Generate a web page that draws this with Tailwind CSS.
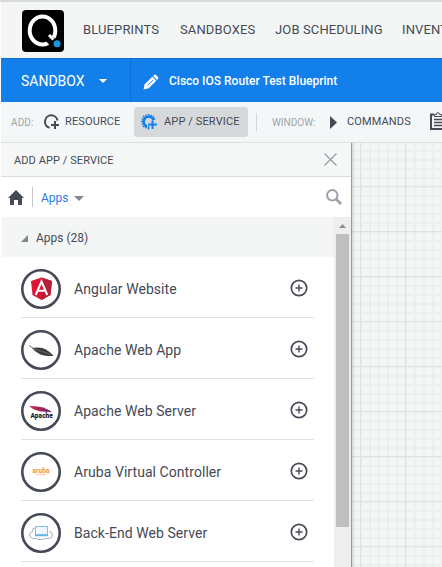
<!DOCTYPE html>
<html lang="en">
<head>
<meta charset="utf-8">
<title>Sandbox</title>
<script src="https://cdn.jsdelivr.net/npm/@tailwindcss/browser@4"></script>
</head>
<body class="bg-white">
<div class="w-[442px] h-[567px] overflow-hidden flex flex-col font-['Roboto',sans-serif] text-[#454a56] whitespace-nowrap">
  <div class="h-[2px] shrink-0 bg-[#d9dbda]"></div>
  <div class="flex-1 min-h-0 ml-px flex flex-col overflow-hidden">
    <nav class="h-[56px] shrink-0 bg-[#f4f6f5] flex items-center text-[13px] tracking-[0.13px]">
      <svg class="ml-[21px] w-[42px] h-[42px] shrink-0 mt-[2px]" viewBox="0 0 42 42">
        <rect width="42" height="42" rx="4" fill="#000"/>
        <ellipse cx="20.500" cy="20.500" rx="12.800" ry="14" fill="none" stroke="#fff" stroke-width="4"/>
        <path d="M24 31l7-4 5 3-6 8z" fill="#000"/>
        <path d="M27 25l4.500 4.500" stroke="#fff" stroke-width="3"/>
        <circle cx="35" cy="33.700" r="5" fill="#000"/>
        <circle cx="35" cy="33.700" r="3.500" fill="#139be0"/>
      </svg>
      <span class="ml-[19px] w-[97px] shrink-0 -mt-px">BLUEPRINTS</span>
      <span class="w-[95px] shrink-0 -mt-px">SANDBOXES</span>
      <span class="w-[127px] shrink-0 -mt-px">JOB SCHEDULING</span>
      <span class="shrink-0 -mt-px">INVENTORY</span>
    </nav>
    <header class="h-[44px] shrink-0 bg-[#127fea] border-t border-[#0f6fd0] text-white flex">
      <div class="w-[130px] shrink-0 border-r border-[#0f6fd0] flex items-center pl-[20px]">
        <span class="w-[78px] text-[14px] mt-[2px]">SANDBOX</span>
        <svg class="w-[8px] h-[4px]" viewBox="0 0 8 4"><path d="M0 0h8L4 4z" fill="#fff"/></svg>
      </div>
      <div class="flex items-center pl-[12px]">
        <svg class="w-[16px] h-[16px] mt-[2px]" viewBox="0 0 16 16"><path d="M.5 15.500l1.200-5.200L9.300 2.700l4 4L5.700 14.300z" fill="#fff"/><path d="M10 2l1-1q1-.8 2 0l2 2q.8 1 0 2l-1 1z" fill="#fff"/><path d="M4.500 11.500l5.500-5.500" stroke="#127fea" stroke-width=".9"/></svg>
        <span class="ml-[10px] text-[12px] font-medium">Cisco IOS Router Test Blueprint</span>
      </div>
    </header>
    <div class="h-[41px] shrink-0 bg-[#f4f7f8] border-b border-[#dbdfdf] flex items-center text-[11px] tracking-[0.13px]">
      <span class="ml-[10px] w-[33px] shrink-0 text-[10px] text-[#a0a3a6]">ADD:</span>
      <svg class="w-[16px] h-[16px] shrink-0" viewBox="0 0 16 16" fill="none" stroke="#454a56" stroke-width="2"><path d="M5.500 13.700A6.300 6.300 0 1 1 13.500 6.500M7 11h8M11 7v8"/></svg>
      <span class="ml-[5px] w-[69px] shrink-0">RESOURCE</span>
      <div class="w-[114px] h-[30px] shrink-0 rounded-[3px] bg-[#d5d9da] flex items-center pl-[7px]">
        <svg class="w-[16px] h-[16px] shrink-0" viewBox="0 0 16 16" fill="none" stroke="#127fea"><path d="M6 12.300A5 5 0 1 1 12.500 6" stroke-width="2.400"/><path d="M7.500 0v3M0 7.500h3M2 2l2 2M11 4l2-2M2 13l2-2M4.600.7l1 2.500M10.400.7l-1 2.500M.7 4.600l2.500 1M.7 10.400l2.500-1M14.300 4.600l-2.500 1M5.500 11.800l-1 2.500M7.500 12v3.500" stroke-width="1.500"/><path d="M7 10.500h9M11.500 6.500v8.500" stroke-width="2"/></svg>
        <span class="ml-[7px]">APP / SERVICE</span>
      </div>
      <div class="ml-[8px] w-px h-[18px] shrink-0 bg-[#d3d7d9]"></div>
      <span class="ml-[15px] w-[58px] shrink-0 text-[10px] tracking-normal text-[#a0a3a6]">WINDOW:</span>
      <svg class="w-[7px] h-[13px] shrink-0" viewBox="0 0 7 13"><path d="M0 0l7 6.500-7 6.500z" fill="#454a56"/></svg>
      <span class="ml-[10px] w-[83px] shrink-0">COMMANDS</span>
      <svg class="w-[16px] h-[18px] shrink-0 mb-[2px]" viewBox="0 0 16 18" fill="none" stroke="#454a56"><path d="M4 2.500H1v14.500h14V2.500h-3" stroke-width="2"/><path d="M4.500 4.500v-2h2q0-1.800 1.500-1.800t1.500 1.800h2v2z"/><path d="M4 7.500h8M4 10.500h8M4 13.500h8" stroke-width="1.500"/></svg>
    </div>
    <main class="flex-1 min-h-0 flex">
      <aside class="w-[351px] shrink-0 bg-white border-r border-[#979ca4] flex flex-col">
        <div class="h-[34px] shrink-0 bg-[#f6f8f8] border-b border-[#d9dddd] flex items-center pl-[13px] pr-[14px] justify-between">
          <span class="text-[11px] tracking-[0.08px] mt-[3px]">ADD APP / SERVICE</span>
          <svg class="w-[13px] h-[13px]" viewBox="0 0 13 13"><path d="M.5.5l12 12M12.500.5l-12 12" stroke="#9499a5" stroke-width="1.200"/></svg>
        </div>
        <div class="h-[40px] shrink-0 flex items-center pl-[7px]">
          <svg class="w-[16px] h-[15px]" viewBox="0 0 16 15"><path d="M8 0l8 8h-2v7H10V10H6v5H2V8H0z" fill="#454a56"/></svg>
          <div class="ml-[8px] w-px h-[20px] bg-[#c4c7ca]"></div>
          <span class="ml-[8px] w-[33px] text-[12px] text-[#2a7de1] mt-[2px]">Apps</span>
          <svg class="w-[10px] h-[5px] mt-[2px]" viewBox="0 0 10 5"><path d="M0 0h10L5 5z" fill="#808792"/></svg>
          <svg class="ml-auto mr-[9px] w-[16px] h-[16px]" viewBox="0 0 16 16" fill="none" stroke="#9ba0aa"><circle cx="6.300" cy="6.300" r="5.200" stroke-width="2"/><path d="M10 10l5 5" stroke-width="2.600"/></svg>
        </div>
        <div class="flex-1 min-h-0 flex">
          <div class="w-[333px] shrink-0 pl-px">
            <div class="h-[40px] bg-[#f4f6f5] flex items-center pl-[19px]">
              <svg class="w-[7px] h-[7px] mt-[2px]" viewBox="0 0 7 7"><path d="M7 0v7H0z" fill="#808792"/></svg>
              <span class="ml-[8px] text-[12px] mt-[2px]">Apps (28)</span>
            </div>
            <ul class="pl-[19px] pr-[20px] text-[14px] tracking-[0.06px]">
              <li class="h-[61px] border-b border-[#dfe1e3] flex items-center">
                <svg class="w-[40px] h-[40px] mt-[4px]" viewBox="0 0 40 40"><circle cx="20" cy="20" r="18.700" fill="#fff" stroke="#454a56" stroke-width="2.600"/><path d="M20.500 8.500L31 12l-1.500 14-9 5-9-5L10 12z" fill="#dd1635"/><path d="M20.500 8.500L31 12l-1.500 14-9 5z" fill="#b81e38"/><path d="M14.700 26l5.800-13.500L26.300 26M17 21.700h7" fill="none" stroke="#fff" stroke-width="2"/></svg>
                <span class="ml-[13px] flex-1 mt-[4px]">Angular Website</span>
                <svg class="w-[18px] h-[18px] mr-[6px] mt-px" viewBox="0 0 18 18" fill="none" stroke="#454a56"><circle cx="9" cy="9" r="7.700" stroke-width="1.700"/><path d="M5.500 9h7M9 5.500v7" stroke-width="1.400"/></svg>
              </li>
              <li class="h-[61px] border-b border-[#dfe1e3] flex items-center">
                <svg class="w-[40px] h-[40px] mt-[4px]" viewBox="0 0 40 40"><circle cx="20" cy="20" r="18.700" fill="#fff" stroke="#454a56" stroke-width="2.600"/><path d="M8 15.500l4 2.500" stroke="#777" fill="none"/><path d="M11 18q9-1.500 14 1.500t7.500 6.500q-9 .5-14-2t-7.500-6z" fill="#3c3c3a"/><path d="M12 18.500l18 6" stroke="#777" stroke-width=".7"/></svg>
                <span class="ml-[13px] flex-1 mt-[4px]">Apache Web App</span>
                <svg class="w-[18px] h-[18px] mr-[6px] mt-px" viewBox="0 0 18 18" fill="none" stroke="#454a56"><circle cx="9" cy="9" r="7.700" stroke-width="1.700"/><path d="M5.500 9h7M9 5.500v7" stroke-width="1.400"/></svg>
              </li>
              <li class="h-[61px] border-b border-[#dfe1e3] flex items-center">
                <svg class="w-[40px] h-[40px] mt-[4px]" viewBox="0 0 40 40"><defs><linearGradient id="f"><stop offset="0" stop-color="#c33a4a"/><stop offset=".5" stop-color="#a3225a"/><stop offset="1" stop-color="#59265c"/></linearGradient></defs><circle cx="20" cy="20" r="18.700" fill="#fff" stroke="#454a56" stroke-width="2.600"/><path d="M8 15q14-.8 23 6-12 .5-19-3z" fill="url(#f)"/><text x="9.500" y="26.500" font-size="6.500" font-weight="900" fill="#222" textLength="22.500" lengthAdjust="spacingAndGlyphs">Apache</text></svg>
                <span class="ml-[13px] flex-1 mt-[4px]">Apache Web Server</span>
                <svg class="w-[18px] h-[18px] mr-[6px] mt-px" viewBox="0 0 18 18" fill="none" stroke="#454a56"><circle cx="9" cy="9" r="7.700" stroke-width="1.700"/><path d="M5.500 9h7M9 5.500v7" stroke-width="1.400"/></svg>
              </li>
              <li class="h-[61px] border-b border-[#dfe1e3] flex items-center">
                <svg class="w-[40px] h-[40px] mt-[4px]" viewBox="0 0 40 40"><circle cx="20" cy="20" r="18.700" fill="#fff" stroke="#454a56" stroke-width="2.600"/><text x="11.500" y="21" font-size="6.500" font-weight="700" fill="#f78a4b" textLength="17" lengthAdjust="spacingAndGlyphs">aruba</text><path d="M15 22.700h10.500" stroke="#f9b58e" stroke-width="1" stroke-dasharray="1.500 .5"/></svg>
                <span class="ml-[13px] flex-1 mt-[4px]">Aruba Virtual Controller</span>
                <svg class="w-[18px] h-[18px] mr-[6px] mt-px" viewBox="0 0 18 18" fill="none" stroke="#454a56"><circle cx="9" cy="9" r="7.700" stroke-width="1.700"/><path d="M5.500 9h7M9 5.500v7" stroke-width="1.400"/></svg>
              </li>
              <li class="h-[61px] border-b border-[#dfe1e3] flex items-center">
                <svg class="w-[40px] h-[40px] mt-[4px]" viewBox="0 0 40 40"><circle cx="20" cy="20" r="18.700" fill="#fff" stroke="#454a56" stroke-width="2.600"/><path d="M14 15q-3 0-2.500 3.500-3 .5-3 3.500t4 3.500h3q1 1.500 4.500 1t4.500-1h4q3-.5 3-3.500t-3.500-3.500" fill="#fff" stroke="#a9b0b5" stroke-width="1"/><rect x="14.500" y="13.500" width="12" height="8" fill="#eef8fe" stroke="#79c3ec"/><path d="M14 22.500h13" stroke="#67b6e2" stroke-width="1.600"/></svg>
                <span class="ml-[13px] flex-1 mt-[4px]">Back-End Web Server</span>
                <svg class="w-[18px] h-[18px] mr-[6px] mt-px" viewBox="0 0 18 18" fill="none" stroke="#454a56"><circle cx="9" cy="9" r="7.700" stroke-width="1.700"/><path d="M5.500 9h7M9 5.500v7" stroke-width="1.400"/></svg>
              </li>
            </ul>
          </div>
          <div class="w-[17px] shrink-0 bg-[#eeeeee] flex flex-col items-center">
            <svg class="mt-[7px] w-[7px] h-[4px] shrink-0" viewBox="0 0 7 4"><path d="M0 4L3.500 0 7 4z" fill="#8d8d8d"/></svg>
            <div class="mt-[6px] w-[13px] h-[293px] shrink-0 bg-[#bfbfbf]"></div>
          </div>
        </div>
      </aside>
      <svg class="flex-1 h-full bg-[#f4f6f6]">
        <defs>
          <pattern id="minor" x="8" y="43" width="9" height="9" patternUnits="userSpaceOnUse"><path d="M1 0v9M0 1h9" stroke="#edefef" stroke-width="2"/></pattern>
          <pattern id="major" x="8" y="43" width="45" height="45" patternUnits="userSpaceOnUse"><path d="M.5 0v45M0 .5h45" stroke="#dfe2e1" stroke-width="1"/></pattern>
          <linearGradient id="shade"><stop offset="0" stop-color="#000" stop-opacity=".1"/><stop offset="1" stop-color="#000" stop-opacity="0"/></linearGradient>
        </defs>
        <rect width="100%" height="100%" fill="url(#minor)"/>
        <rect width="100%" height="100%" fill="url(#major)"/>
        <rect width="4" height="100%" fill="url(#shade)"/>
      </svg>
    </main>
  </div>
</div>
</body>
</html>
